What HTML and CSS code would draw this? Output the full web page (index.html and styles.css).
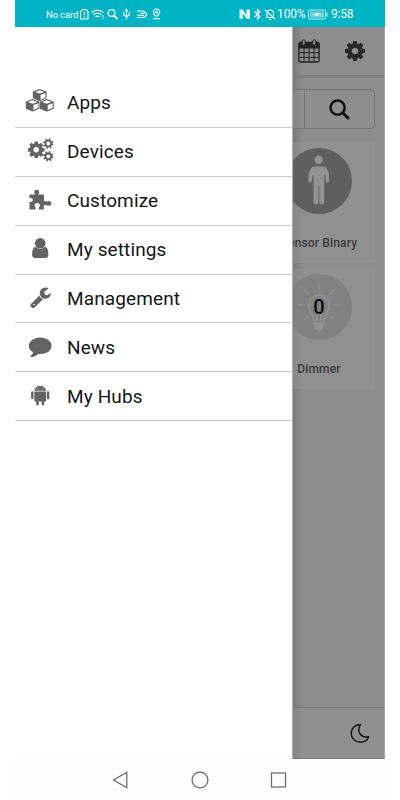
FILE: index.html
```html
<!DOCTYPE html>
<html lang="en">
<head>
<meta charset="utf-8">
<title>Menu</title>
<link rel="stylesheet" href="styles.css">
</head>
<body>
<svg class="defs" width="0" height="0" aria-hidden="true">
  <symbol id="cog" viewBox="128 128 1536 1536"><path d="M1152 896q0-106-75-181t-181-75-181 75-75 181 75 181 181 75 181-75 75-181zm512-109v222q0 12-8 23t-20 13l-185 28q-19 54-39 91 35 50 107 138 10 12 10 25t-9 23q-27 37-99 108t-94 71q-12 0-26-9l-138-108q-44 23-91 38-16 136-29 186-7 28-36 28h-222q-14 0-24.500-8.500t-11.500-21.500l-28-184q-49-16-90-37l-141 107q-10 9-25 9-14 0-25-11-126-114-165-168-7-10-7-23 0-12 8-23 15-21 51-66.500t54-70.500q-27-50-41-99l-183-27q-13-2-21-12.500t-8-23.500v-222q0-12 8-23t19-13l186-28q14-46 39-92-40-57-107-138-10-12-10-24 0-10 9-23 26-36 98.500-107.500t94.500-71.500q13 0 26 10l138 107q44-23 91-38 16-136 29-186 7-28 36-28h222q14 0 24.500 8.500t11.500 21.500l28 184q49 16 90 37l142-107q9-9 24-9 13 0 25 10 129 119 165 170 7 8 7 22 0 12-8 23-15 21-51 66.500t-54 70.500q26 50 41 98l183 28q13 2 21 12.500t8 23.500z"/></symbol>
  <symbol id="cube" viewBox="1 0 13 14" preserveAspectRatio="none"><path d="M7.500 .1 14 2.900V10.300L7.500 13.900 1 10.300V2.900Z"/><path class="cut" d="M7.500 1.500 11.800 3.300 7.500 5.100 3.200 3.300ZM8.300 6.600 12.800 4.700V9.600L8.300 12.100Z"/></symbol>
  <symbol id="minicog" viewBox="-5 -5 10 10"><circle r="2.600" fill="none" stroke="currentColor" stroke-width="1.700"/><circle r="3.900" fill="none" stroke="currentColor" stroke-width="1.700" stroke-dasharray="1.600 1.463"/></symbol>
</svg>
<div class="phone">
  <header class="status">
    <div class="status-left">
      <span class="carrier">No card</span>
      <svg width="78" height="14" viewBox="0 0 78 14">
        <g fill="none" stroke="#fff" stroke-width="1.100">
          <path d="M3.500 2.500H7L9 4.500V12H1.500V4.500ZM5.300 4.500V8.300M5.300 9.300V10.500"/>
          <path d="M12.700 5.500Q18.500 .8 24.300 5.500M14.600 7.800Q18.500 4.600 22.400 7.800M16.500 10Q18.500 8.400 20.500 10" stroke-width="1.300"/>
          <path d="M23.800 8V12" stroke-dasharray="2 1"/>
          <circle cx="32.500" cy="6" r="3.400" stroke-width="1.300"/><path d="m35 8.500 3.500 3.700" stroke-width="1.800"/>
          <path d="M47.500 3V12.500M44.800 5V8L47.500 9.800 50.300 8V5M46.300 4.300 47.500 2.500 48.700 4.300"/>
          <path d="M58 4H63.500Q67.500 5 67.500 7.200T63.500 10.500H58M61 6.200H66M58 8.300H65" stroke-width="1.100"/>
        </g>
      </svg>
      <svg class="pin" width="9" height="14" viewBox="0 0 9 14" fill="none" stroke="#fff" stroke-width="1.100"><path d="M4.500 9.600Q1.300 7.200 1.300 5.300A3.200 3.200 0 0 1 7.700 5.300Q7.700 7.200 4.500 9.600ZM.8 11.800H8.200"/><circle cx="4.500" cy="5.300" r=".8"/></svg>
    </div>
    <div class="status-right">
      <svg width="37" height="14" viewBox="0 0 37 14">
        <path fill="#e5f9fb" d="M.5 2.500H3.700L7.500 8V2.500H11V11.800H7.700L4 6.500V11.800H.5Z"/>
        <g fill="none" stroke="#fff" stroke-width="1.100"><path d="M15.500 4.500 21 9.500 18.500 12V2.500L21 5 15.500 10"/><path d="M26 3 36 12M27 10.500H34M28 10V6Q28 3 31 3 34.500 3 34.500 6V9M30 12.200H32.500"/></g>
      </svg>
      <span class="percent">100%</span>
      <svg width="20" height="11" viewBox="0 0 20 11"><rect x=".5" y="1" width="17" height="9" rx=".8" fill="none" stroke="#b9edf2"/><rect x="2" y="2.500" width="14" height="6" fill="#6dd5df"/><path fill="#fff" d="M4 5 8.500 5 8 3.500 14 5.600H9.800L10.300 7.500Z"/><path stroke="#d4f5f8" d="M19 3.500V7.500"/></svg>
      <span class="clock">9:58</span>
    </div>
  </header>

  <div class="screen">
    <nav class="drawer">
      <a class="item"><svg class="icon" viewBox="0 0 32 28"><use href="#cube" x="8.600" y="2" width="14.200" height="12.400"/><use href="#cube" x="1.500" y="12" width="14.200" height="12.800"/><use href="#cube" x="15.700" y="12" width="14.200" height="12.800"/></svg>Apps</a>
      <a class="item"><svg class="icon" viewBox="0 0 32 28"><use href="#cog" x="3.800" y="5.300" width="17" height="17"/><use href="#minicog" x="18.800" y="2" width="11" height="11"/><use href="#minicog" x="18.800" y="14.800" width="11" height="11"/></svg>Devices</a>
      <a class="item"><svg class="icon" viewBox="0 0 32 28"><path d="M5.500 9.500H11.300Q10.200 8.500 10.200 7 10.200 4.700 12.700 4.700T15.200 7Q15.200 8.500 14.100 9.500H19.900V16.500Q21 15.700 22.300 16.600 23.700 15.900 25 15.900 27.500 16 27.500 18.400T25 20.800Q23.500 20.800 22.300 19.900 21 20.300 19.900 19.800V24.500H15.200Q14.600 23.600 15 22.300 16.200 21.300 16 19.800 15.600 18 13.200 18 10.700 18 10.500 20 10.400 21.400 11.500 22.300 11.800 23.500 11.300 24.500H5.500V16.500Q7 17.300 8.300 16.400 9.500 14.900 8.200 13.500 7 12.600 5.500 13.700Z"/></svg>Customize</a>
      <a class="item"><svg class="icon" viewBox="0 0 32 28"><circle cx="16.200" cy="9.200" r="5.300"/><path d="M11.600 12.800Q8.300 13.300 8.100 20 8 24 11 24H21.500Q24.500 24 24.400 20 24.200 13.300 20.900 12.800 16.200 17.400 11.600 12.800Z"/></svg>My settings</a>
      <a class="item"><svg class="icon" viewBox="0 0 32 28"><svg x="5.200" y="3" width="22.500" height="22.500" viewBox="0 0 1792 1792"><path d="M448 1472q0-26-19-45t-45-19-45 19-19 45 19 45 45 19 45-19 19-45zm644-420l-682 682q-37 37-90 37-52 0-91-37l-106-108q-38-36-38-90 0-53 38-91l681-681q39 98 114.500 173.500t173.500 114.500zm634-435q0 39-23 106-47 134-164.500 217.500t-258.500 83.500q-185 0-316.500-131.500t-131.500-316.500 131.500-316.500 316.500-131.500q58 0 121.500 16.500t107.500 46.500q16 11 16 28t-16 28l-293 169v224l193 107q5-3 79-48.500t135.500-81 70.500-35.500q15 0 23.500 10t8.500 25z"/></svg></svg>Management</a>
      <a class="item"><svg class="icon" viewBox="0 0 32 28"><svg x="4.700" y="2.300" width="23" height="23" viewBox="0 0 1792 1792"><path d="M1792 896q0 174-120 321.500t-326 233-450 85.500q-70 0-145-8-198 175-460 242-49 14-114 22-17 2-30.500-9t-17.500-29v-1q-3-4-.5-12t2-10 4.500-9.500l6-9 7-8.500 8-9q7-8 31-34.500t34.500-38 31-39.500 32.500-51 27-59 26-76q-157-89-247.500-220t-90.500-281q0-174 120-321.500t326-233 450-85.500 450 85.500 326 233 120 321.500z"/></svg></svg>News</a>
      <a class="item"><svg class="icon" viewBox="0 0 32 28"><path d="M10.300 9.800Q10.500 6.800 13.700 5.500L12.800 4 13.200 3.800 14.200 5.300Q16.200 4.700 18.200 5.300L19.200 3.800 19.600 4 18.700 5.500Q21.900 6.800 22.100 9.800ZM10.300 10.600H22.100V19.500Q22.100 20.600 21 20.600H20.200V23.300Q20.200 24.600 18.900 24.600T17.600 23.300V20.600H14.800V23.300Q14.800 24.600 13.500 24.600T12.200 23.300V20.600H11.400Q10.300 20.600 10.300 19.500Z"/><rect x="7.100" y="10.300" width="2.400" height="8" rx="1.200"/><rect x="22.900" y="10.300" width="2.400" height="8" rx="1.200"/><circle class="cut" cx="13.700" cy="7.800" r=".55"/><circle class="cut" cx="18.700" cy="7.800" r=".55"/></svg>My Hubs</a>
    </nav>

    <main class="pane">
      <div class="toolbar">
        <svg width="22" height="24" viewBox="0 0 22 24" fill="none" stroke="#222"><rect x=".9" y="3.500" width="20.200" height="19.500" rx="1.500" stroke-width="1.300"/><path fill="#222" d="M1 4H21V9H1Z"/><path d="M6 9V23M11 9V23M16 9V23M1 13.700H21M1 18.400H21" stroke-width="1"/><rect x="4.200" y=".8" width="3" height="5.500" rx="1.500" fill="#8c8c8c"/><rect x="14.800" y=".8" width="3" height="5.500" rx="1.500" fill="#8c8c8c"/></svg>
        <svg class="gear" width="20" height="20"><use href="#cog" width="20" height="20"/></svg>
      </div>
      <div class="search">
        <div class="field"></div>
        <div class="go"><svg width="21" height="21" viewBox="0 0 21 21" fill="none" stroke="#111"><circle cx="8.600" cy="8.600" r="7.100" stroke-width="2.500"/><path d="m13.700 13.700 5.300 5.300" stroke-width="3" stroke-linecap="round"/></svg></div>
      </div>
      <section class="card">
        <svg class="disc" viewBox="0 0 66 66"><circle cx="33" cy="33" r="33" fill="#5f5f5f"/><g fill="#929292"><circle cx="32.700" cy="11.700" r="4.200"/><path d="M29 18.500H37Q42.800 19 43 29V33Q42.500 35.300 40 34.300L39 27 38.300 27V54Q38 56.500 35.500 56.500 33.300 56.500 33.300 54V38H32.500V54Q32.500 56.500 30.200 56.500 27.600 56.500 27.500 54V27H26.800L25.500 34Q22.600 35.200 22.400 33V29Q23 19 29 18.500Z"/></g></svg>
        <h2>Sensor Binary</h2>
      </section>
      <section class="card second">
        <svg class="disc" viewBox="0 0 66 66"><circle cx="33" cy="33" r="33" fill="#818181"/><g fill="none" stroke="#8f8f8f" stroke-width="1.600"><path d="M33 9.500V16M17.500 15.500 22.500 20.500M48.500 15.500 43.500 20.500M11.500 31H19M47 31H54.500M18 46 23 41M48 46 43 41"/><path stroke-width="2" d="M28.500 49Q29 45 25.500 40 20.500 32 24.500 25.500 28 21 33 21T41.500 25.500Q45.500 32 40.500 40 37 45 37.500 49ZM31 47V36M35 47V36"/></g><path fill="#929292" d="M28.500 50H37.500V54Q33 59 28.500 54Z"/><text x="33" y="39.500" text-anchor="middle">0</text></svg>
        <h2>Dimmer</h2>
      </section>
      <footer class="footer"><svg width="20" height="21" viewBox="0 0 20 21" fill="none" stroke="#111" stroke-width="1.400" stroke-linejoin="round"><path d="M10.500 1.500C4.500 1.700 1.200 5.500 1.200 10.200S5 19.200 10.300 19.200C14.500 19.200 17.500 17 18.600 13.700 11.500 15.200 6 9 10.500 1.500Z"/></svg></footer>
    </main>
  </div>

  <div class="navbar">
    <svg width="18" height="18" viewBox="0 0 18 18"><path d="M1.500 9 14.800 1.200V16.800Z"/></svg>
    <svg width="18" height="18" viewBox="0 0 18 18"><circle cx="9" cy="9" r="7.900"/></svg>
    <svg width="18" height="18" viewBox="0 0 18 18"><rect x="1.500" y="2" width="14" height="14"/></svg>
  </div>
</div>
</body>
</html>
```
FILE: styles.css
```css
* { box-sizing: border-box; }
body { margin: 0; background: #fff; font-family: Roboto, sans-serif; }
svg { display: block; flex: none; }
.defs { position: absolute; }
.phone { width: 370px; height: 800px; margin: 0 15px; display: flex; flex-direction: column; overflow: hidden; }

.status { flex: none; height: 27px; padding: 1px 31px 0; background: #00b3c5; color: #fff; display: flex; justify-content: space-between; align-items: center; }
.status-left, .status-right { display: flex; align-items: center; white-space: nowrap; }
.carrier { width: 33px; font-size: 9.5px; letter-spacing: -.15px; }
.pin { margin-left: -5px; }
.status-right { margin-right: -1px; }
.percent { width: 28px; margin: 0 3px 0 1px; font-size: 12px; letter-spacing: -.1px; }
.clock { width: 24px; margin-left: 3px; font-size: 12px; letter-spacing: -.2px; }

.screen { height: 732px; display: grid; grid-template-columns: 277px 93px; }
.drawer { padding-top: 52px; background: #fff; }
.item { height: 48.900px; padding: 0 0 0 9px; display: flex; align-items: center; gap: 11px; border-bottom: 1px solid #c9c9c9; font-size: 19px; letter-spacing: .12px; color: #151515; }
.icon { width: 32px; height: 28px; margin-top: -3px; fill: #636363; color: #636363; }
.cut { fill: #fff; }

.pane { display: flex; flex-direction: column; overflow: hidden; background: linear-gradient(90deg, #797979, #8d8d8d 10px, #8d8d8d); border-left: 1px solid #b0b0b0; border-right: 1px solid #a5a5a5; }
.toolbar { flex: none; height: 51px; padding: 0 19px 2px 5px; display: flex; align-items: center; justify-content: space-between; border-bottom: 3px solid #7f7f7f; }
.toolbar svg { margin-top: 1px; }
.gear { fill: #292929; }
.search { flex: none; width: 112px; height: 40px; margin: 11px 0 0 -30px; display: flex; border: 1px solid #747474; border-radius: 4px; background: #90909080; }
.field { width: 41px; border-right: 1px solid #747474; }
.go { flex: 1; display: flex; align-items: center; justify-content: center; }
.card { flex: none; width: 112px; height: 121px; margin: 13px 0 0 -30px; padding-top: 6px; display: flex; flex-direction: column; align-items: center; background: #94949480; }
.card.second { height: 120px; margin-top: 6px; padding-top: 5px; }
.disc { width: 66px; height: 66px; }
.disc text { font: 500 20px Roboto, sans-serif; fill: #080808; }
.card h2 { margin: 22px 0 0; font-size: 12px; line-height: 14px; font-weight: 500; letter-spacing: .15px; color: #3b3b3b; white-space: nowrap; }
.footer { height: 52px; margin-top: auto; padding-right: 14px; display: flex; align-items: center; justify-content: flex-end; border-top: 1px solid #777; border-bottom: 1px solid #777; background: #92929280; }

.navbar { height: 41px; background: #fcfcfc; display: flex; justify-content: center; gap: 61px; align-items: center; }
.navbar svg { fill: none; stroke: #666; stroke-width: 1.200; }
```
